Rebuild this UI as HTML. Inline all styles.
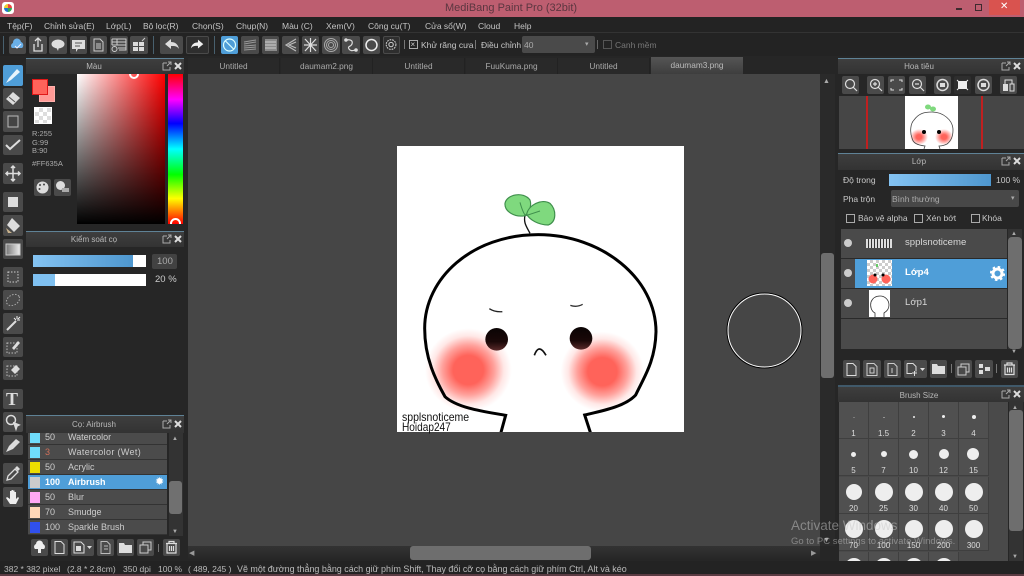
<!DOCTYPE html>
<html><head><meta charset="utf-8"><style>
html,body{margin:0;padding:0;width:1024px;height:576px;overflow:hidden;background:#262626}
body{position:relative;font-family:"Liberation Sans","DejaVu Sans",sans-serif;color:#c8c8c8;font-size:9px}
div,span,svg{position:absolute;box-sizing:border-box}
.t{white-space:nowrap;line-height:12px}
.b{background:#4a4a4a;border-radius:2px}
.b svg{left:0;top:0;width:100%;height:100%}
.h{background:linear-gradient(#3e3e3e,#333);border-top:1px solid #5f8296;text-align:center;color:#b8b8b8;font-size:8px;line-height:15px;padding-right:22px}
.m{top:20px;font-size:8.5px;color:#c4c4c4}
.tab{top:58px;height:16px;text-align:center;font-size:8.3px;line-height:17px;color:#aaa;background:#292929;border-right:1px solid #222}
.row{left:28px;width:139px;height:15px;background:#4b4b4b;border-bottom:1px solid #333;color:#ccc;font-size:9px;line-height:14px}
.row .sw{left:2px;top:2px;width:10px;height:11px}
.row .n{left:17px;top:0}.row .l{left:40px;top:0}
.cell{width:30px;height:37px;background:#505050;border-right:1px solid #3f3f3f;border-bottom:1px solid #3f3f3f;color:#ddd;font-size:8px;text-align:center}
.cell i{position:absolute;background:#eee;border-radius:50%}
.cell span{left:0;width:100%;top:27px;line-height:10px}
.c{font-size:8.5px}
</style></head><body>

<div style="left:0;top:0;width:1024px;height:17px;background:#bd5e70"></div>
<div style="left:2px;top:2px;width:12px;height:12px;border-radius:3px;background:#fff"></div>
<div style="left:4px;top:4px;width:8px;height:8px;border-radius:50%;background:conic-gradient(#e44 0 25%,#3a5 0 50%,#27c 0 75%,#ec3 0)"></div>
<div class="t" style="left:445px;top:2px;font-size:11px;line-height:13px;color:#5b3640">MediBang Paint Pro (32bit)</div>
<div style="left:956px;top:8px;width:6px;height:2px;background:#3d2a2e"></div>
<div style="left:975px;top:4px;width:7px;height:7px;border:1px solid #3d2a2e"></div>
<div style="left:989px;top:0;width:31px;height:15px;background:#d9534f"></div>
<div class="t" style="left:1000px;top:1px;font-size:10px;color:#fff;font-weight:bold">✕</div>

<div style="left:0;top:17px;width:1024px;height:16px;background:#232323;border-bottom:1px solid #333"></div>
<div class="t m" style="left:7px">Tệp(F)</div>
<div class="t m" style="left:44px">Chỉnh sửa(E)</div>
<div class="t m" style="left:106px">Lớp(L)</div>
<div class="t m" style="left:143px">Bộ lọc(R)</div>
<div class="t m" style="left:192px">Chọn(S)</div>
<div class="t m" style="left:236px">Chụp(N)</div>
<div class="t m" style="left:282px">Màu (C)</div>
<div class="t m" style="left:326px">Xem(V)</div>
<div class="t m" style="left:368px">Công cụ(T)</div>
<div class="t m" style="left:425px">Cửa sổ(W)</div>
<div class="t m" style="left:478px">Cloud</div>
<div class="t m" style="left:514px">Help</div>

<div style="left:0;top:33px;width:1024px;height:23px;background:#232323"></div>
<div style="left:3px;top:36px;width:1px;height:18px;background:#48606e"></div>
<div class="b" style="left:9px;top:36px;width:17px;height:18px"><svg viewBox="0 0 17 18"><path d="M3 12a3 3 0 0 1 1-5 4 4 0 0 1 8-1 3.500 3.500 0 0 1 1 6z" fill="#6ab0e8"/><path d="M6 10l2 2 4-4" stroke="#eef" fill="none"/></svg></div>
<div class="b" style="left:29px;top:36px;width:18px;height:18px"><svg viewBox="0 0 18 18" fill="none" stroke="#ddd" stroke-width="1.300"><path d="M5 8v7h8V8M9 11V3M6 5l3-3 3 3"/></svg></div>
<div class="b" style="left:49px;top:36px;width:18px;height:18px"><svg viewBox="0 0 18 18"><ellipse cx="9" cy="8" rx="6.500" ry="4.500" fill="#ddd"/><path d="M7 11l2 4 1-4z" fill="#ddd"/></svg></div>
<div class="b" style="left:70px;top:36px;width:17px;height:18px"><svg viewBox="0 0 17 18"><path d="M2 4h13v9H8l-2 3v-3H2z" fill="#ddd"/><path d="M5 7h7M5 10h5" stroke="#555"/></svg></div>
<div class="b" style="left:90px;top:36px;width:17px;height:18px"><svg viewBox="0 0 17 18" fill="none" stroke="#ccc"><path d="M4 3h6l3 3v9H4zM6 8h5M6 10h5M6 12h5"/></svg></div>
<div class="b" style="left:110px;top:36px;width:18px;height:18px"><svg viewBox="0 0 18 18" fill="none" stroke="#ccc"><path d="M2 3h14v11H9M2 3v6M2 6h14M2 9h14M7 3v6M8 12h8"/><circle cx="4.500" cy="13" r="2.500"/></svg></div>
<div class="b" style="left:130px;top:36px;width:18px;height:18px"><svg viewBox="0 0 18 18"><path d="M3 6h5v4H3zM9 6h5v4H9zM3 11h5v4H3zM9 11h5v4H9z" fill="#ddd"/><path d="M12 5l3-3" stroke="#ccc"/></svg></div>
<div style="left:153px;top:36px;width:1px;height:18px;background:#48606e"></div>
<div class="b" style="left:160px;top:36px;width:23px;height:18px"><svg viewBox="0 0 23 18"><path d="M5 8l6-5v3c4 0 7 2 8 7-2-3-4-3-8-3v3z" fill="#ddd"/></svg></div>
<div class="b" style="left:186px;top:36px;width:23px;height:18px;background:#2e2e2e;border:1px solid #4a4a4a"><svg viewBox="0 0 23 18"><path d="M18 8l-6-5v3c-4 0-7 2-8 7 2-3 4-3 8-3v3z" fill="#eee"/></svg></div>
<div style="left:214px;top:36px;width:1px;height:18px;background:#48606e"></div>
<div class="b" style="left:221px;top:36px;width:17px;height:18px;background:#4f9ed8"><svg viewBox="0 0 17 18" fill="none" stroke="#dff" stroke-width="1.200"><circle cx="8.500" cy="9" r="6"/><path d="M4 4.500l9 9"/></svg></div>
<div class="b" style="left:241px;top:36px;width:18px;height:18px"><svg viewBox="0 0 18 18" fill="none" stroke="#999"><path d="M3 6l12-2M3 8l12-2M3 10l12-1M3 12l12-1M3 14l12-1"/></svg></div>
<div class="b" style="left:262px;top:36px;width:17px;height:18px"><svg viewBox="0 0 17 18" fill="none" stroke="#ccc"><path d="M4 3v12M6 3v12M8 3v12M10 3v12M12 3v12M14 3v12M3 6h11M3 9h11M3 12h11"/></svg></div>
<div class="b" style="left:282px;top:36px;width:17px;height:18px"><svg viewBox="0 0 17 18" fill="none" stroke="#bbb" stroke-width="1.200"><path d="M14 3L4 9l10 6M14 6L7 9l7 3"/></svg></div>
<div class="b" style="left:302px;top:36px;width:17px;height:18px"><svg viewBox="0 0 17 18" fill="none" stroke="#ddd" stroke-width="1.200"><path d="M3 3l11 12M14 3L3 15M8.500 2v14M2 9h13"/></svg></div>
<div class="b" style="left:322px;top:36px;width:18px;height:18px"><svg viewBox="0 0 18 18" fill="none" stroke="#aaa"><circle cx="9" cy="9" r="6.500"/><circle cx="9" cy="9" r="4.500"/><circle cx="9" cy="9" r="2.500"/></svg></div>
<div class="b" style="left:342px;top:36px;width:18px;height:18px"><svg viewBox="0 0 18 18" fill="none" stroke="#ddd" stroke-width="1.200"><path d="M4 4c5-1 7 1 6 4s-5 2-3 5 5 1 7 1"/><circle cx="4" cy="4" r="1.200" fill="#ddd"/><circle cx="14" cy="14" r="1.200" fill="#ddd"/></svg></div>
<div class="b" style="left:363px;top:36px;width:17px;height:18px"><svg viewBox="0 0 17 18" fill="none" stroke="#eee" stroke-width="1.500"><circle cx="8.500" cy="9" r="5.500"/></svg></div>
<div class="b" style="left:383px;top:36px;width:17px;height:18px;background:#2e2e2e;border:1px solid #4a4a4a"><svg viewBox="0 0 17 18" fill="none" stroke="#ccc" stroke-width="1.200"><circle cx="8" cy="8.500" r="2.500"/><circle cx="8" cy="8.500" r="5.500" stroke-dasharray="2 1"/></svg></div>
<div style="left:404px;top:40px;width:1px;height:9px;background:#777"></div>
<div style="left:409px;top:40px;width:9px;height:9px;border:1px solid #aaa"></div>
<div class="t" style="left:410.500px;top:39px;font-size:8px;color:#ccc">×</div>
<div class="t c" style="left:421px;top:39px">Khử răng cưa</div>
<div style="left:475px;top:40px;width:1px;height:9px;background:#777"></div>
<div class="t c" style="left:481px;top:39px">Điều chỉnh</div>
<div style="left:522px;top:36px;width:73px;height:17px;background:#4a4a4a;border-radius:2px"></div>
<div class="t" style="left:524px;top:39px;font-size:8.500px;color:#aaa">40</div>
<div class="t" style="left:585px;top:39px;font-size:7px;color:#aaa">▾</div>
<div style="left:597px;top:40px;width:1px;height:9px;background:#666"></div>
<div style="left:603px;top:40px;width:9px;height:9px;border:1px solid #555"></div>
<div class="t c" style="left:615px;top:39px;color:#777">Canh mềm</div>

<div style="left:186px;top:56px;width:650px;height:18px;background:#262626"></div>
<div class="tab" style="left:188px;width:92px">Untitled</div>
<div class="tab" style="left:281px;width:92px">daumam2.png</div>
<div class="tab" style="left:373px;width:92px">Untitled</div>
<div class="tab" style="left:466px;width:92px">FuuKuma.png</div>
<div class="tab" style="left:558px;width:92px">Untitled</div>
<div class="tab" style="left:651px;top:57px;height:17px;width:92px;background:linear-gradient(#555,#3e3e3e);color:#bbb;border:0">daumam3.png</div>

<div style="left:188px;top:74px;width:632px;height:472px;background:#464646"></div>
<div style="left:397px;top:146px;width:287px;height:286px;background:#fff"></div>
<svg style="left:395px;top:145px;width:290px;height:290px" viewBox="0 0 870 870">
<defs>
<radialGradient id="bl"><stop offset="0" stop-color="#ff635a"/><stop offset=".35" stop-color="#ff635a"/><stop offset=".6" stop-color="#ff635a" stop-opacity=".6"/><stop offset=".82" stop-color="#ff635a" stop-opacity=".15"/><stop offset="1" stop-color="#ff635a" stop-opacity="0"/></radialGradient>
<linearGradient id="ey" x1="0" y1="0" x2="0" y2="1"><stop offset="0" stop-color="#0a0404"/><stop offset=".6" stop-color="#1a0808"/><stop offset="1" stop-color="#5a2a2a"/></linearGradient>
<clipPath id="cv"><rect x="6" y="3" width="861" height="858"/></clipPath>
</defs>
<g clip-path="url(#cv)">
<ellipse cx="220" cy="675" rx="130" ry="125" fill="url(#bl)"/>
<ellipse cx="622" cy="680" rx="125" ry="120" fill="url(#bl)"/>
<path d="M318 862L332 811C285 802 190 792 150 755 122 705 89 640 89 550 89 400 230 269 430 269 620 269 783 400 783 560 781 650 745 700 722 750 690 785 620 798 569 810L586 862" fill="none" stroke="#000" stroke-width="9"/>
<circle cx="305" cy="583" r="34" fill="url(#ey)"/>
<circle cx="558" cy="580" r="34" fill="url(#ey)"/>
<path d="M418 631C425 612 435 600 453 631" fill="none" stroke="#111" stroke-width="5"/>
<path d="M283 491Q300 502 322 500" fill="none" stroke="#222" stroke-width="4"/>
<path d="M526 481Q545 488 563 478" fill="none" stroke="#333" stroke-width="4"/>
<path d="M405 265C395 245 385 235 390 210" fill="none" stroke="#111" stroke-width="4"/>
<path d="M390 212C360 218 328 200 330 175 335 148 385 138 405 165 410 180 405 200 390 212Z" fill="#7fd97e" stroke="#3f8f4c" stroke-width="3.500"/>
<path d="M395 208C400 180 440 160 465 175 485 195 485 230 460 240 430 240 405 225 395 208Z" fill="#7fd97e" stroke="#3f8f4c" stroke-width="3.500"/>
<path d="M375 172C380 190 385 205 392 212L435 198" fill="none" stroke="#3f8f4c" stroke-width="3"/>
</g>
</svg>
<div class="t" style="left:402px;top:411px;font-size:12px;color:#111;transform:scaleX(.875);transform-origin:0 0">spplsnoticeme</div>
<div class="t" style="left:402px;top:421px;font-size:12px;color:#111;transform:scaleX(.84);transform-origin:0 0">Hoidap247</div>
<svg style="left:725px;top:291px;width:80px;height:80px" viewBox="0 0 80 80"><circle cx="39.500" cy="39.500" r="37.500" fill="none" stroke="#000" stroke-width="1"/><circle cx="39.500" cy="39.500" r="36.500" fill="none" stroke="#fff" stroke-width="1"/></svg>

<div style="left:820px;top:74px;width:15px;height:472px;background:#2a2a2a"></div>
<div style="left:821px;top:253px;width:13px;height:125px;background:#6e6e6e;border-radius:3px"></div>
<div class="t" style="left:823px;top:76px;font-size:7px;color:#aaa">▲</div>
<div class="t" style="left:823px;top:535px;font-size:7px;color:#aaa">▼</div>
<div style="left:188px;top:546px;width:632px;height:14px;background:linear-gradient(#333,#262626)"></div>
<div style="left:410px;top:546px;width:181px;height:14px;background:#6e6e6e;border-radius:3px"></div>
<div class="t" style="left:189px;top:548px;font-size:7px;color:#999">◀</div>
<div class="t" style="left:811px;top:548px;font-size:7px;color:#999">▶</div>

<div style="left:0;top:56px;width:26px;height:501px;background:#262626"></div>
<div class="b" style="left:3px;top:65px;width:20px;height:21px;background:#4f9ed8"><svg viewBox="0 0 20 21"><path d="M3 18l3-5 8-9 3 3-9 8z" fill="#e8f4fc"/></svg></div>
<div class="b" style="left:3px;top:88px;width:20px;height:21px"><svg viewBox="0 0 20 21"><path d="M3 11l7-7 7 6-7 7z" fill="#ddd"/><path d="M6 9l6 5" stroke="#555"/></svg></div>
<div class="b" style="left:3px;top:111px;width:20px;height:21px"><svg viewBox="0 0 20 21"><rect x="5" y="5" width="10" height="11" fill="#444" stroke="#bbb"/></svg></div>
<div class="b" style="left:3px;top:135px;width:20px;height:20px"><svg viewBox="0 0 20 20" fill="none" stroke="#ddd" stroke-width="2"><path d="M3 10l4 4 10-9"/></svg></div>
<div class="b" style="left:3px;top:163px;width:20px;height:21px"><svg viewBox="0 0 20 21" fill="none" stroke="#ddd" stroke-width="1.500"><path d="M10 3v15M3 10.500h14M8 5l2-2 2 2M8 16l2 2 2-2M5 8.500l-2 2 2 2M15 8.500l2 2-2 2"/></svg></div>
<div class="b" style="left:3px;top:192px;width:20px;height:20px"><svg viewBox="0 0 20 20"><rect x="5" y="5" width="10" height="10" fill="#ddd"/></svg></div>
<div class="b" style="left:3px;top:215px;width:20px;height:21px"><svg viewBox="0 0 20 21"><path d="M9 3l8 8-6 6-7-7z" fill="#ddd"/><path d="M3 13l2 5h4" fill="#c9b28b"/></svg></div>
<div class="b" style="left:3px;top:239px;width:20px;height:20px"><svg viewBox="0 0 20 20"><defs><linearGradient id="g1"><stop offset="0" stop-color="#777"/><stop offset="1" stop-color="#eee"/></linearGradient></defs><rect x="3" y="5" width="14" height="11" fill="url(#g1)" stroke="#ccc"/></svg></div>
<div class="b" style="left:3px;top:267px;width:20px;height:20px"><svg viewBox="0 0 20 20"><rect x="5" y="5" width="10" height="10" fill="none" stroke="#ccc" stroke-dasharray="1.500 1.500"/></svg></div>
<div class="b" style="left:3px;top:290px;width:20px;height:20px"><svg viewBox="0 0 20 20"><ellipse cx="10" cy="10" rx="7" ry="5" fill="none" stroke="#aaa" stroke-dasharray="1.500 1.500" transform="rotate(-30 10 10)"/></svg></div>
<div class="b" style="left:3px;top:313px;width:20px;height:21px"><svg viewBox="0 0 20 21"><path d="M4 17L13 8" stroke="#ddd" stroke-width="2"/><path d="M14 3v3M17 7h-3M11 5l2 2M17 4l-2 2" stroke="#eee"/></svg></div>
<div class="b" style="left:3px;top:337px;width:20px;height:20px"><svg viewBox="0 0 20 20"><rect x="4" y="6" width="10" height="10" fill="none" stroke="#bbb" stroke-dasharray="1.500 1.500"/><path d="M9 11l6-7 2 2-6 7z" fill="#ddd"/></svg></div>
<div class="b" style="left:3px;top:360px;width:20px;height:20px"><svg viewBox="0 0 20 20"><rect x="4" y="6" width="10" height="10" fill="none" stroke="#bbb" stroke-dasharray="1.500 1.500"/><path d="M8 10l5-5 4 4-5 5z" fill="#ddd"/></svg></div>
<div class="b" style="left:3px;top:389px;width:20px;height:20px"></div>
<div class="t" style="left:6px;top:390px;font-family:'Liberation Serif',serif;font-weight:bold;font-size:18px;line-height:18px;color:#ddd">T</div>
<div class="b" style="left:3px;top:412px;width:20px;height:20px"><svg viewBox="0 0 20 20" fill="none" stroke="#ddd" stroke-width="1.500"><circle cx="8" cy="8" r="4.500"/><path d="M11 11l5 2-2 1-1 3z" fill="#ddd"/></svg></div>
<div class="b" style="left:3px;top:435px;width:20px;height:20px"><svg viewBox="0 0 20 20"><path d="M3 17l3-6 7-7 4 3-7 7z" fill="#ddd"/></svg></div>
<div class="b" style="left:3px;top:463px;width:20px;height:21px"><svg viewBox="0 0 20 21"><path d="M4 17l1-4 7-7 3 3-7 7z" fill="none" stroke="#ddd" stroke-width="1.300"/><path d="M12 5l2-2 3 3-2 2z" fill="#ddd"/></svg></div>
<div class="b" style="left:3px;top:487px;width:20px;height:20px"><svg viewBox="0 0 20 20"><path d="M7 17L3 11l1-1 3 2V4h1.500v6V3H10v7V3.500h1.500V10V5H13v7l2-2 1 1-3 6z" fill="#eee"/></svg></div>

<div class="h" style="left:26px;top:58px;width:158px;height:16px">Màu</div>
<div style="left:26px;top:74px;width:158px;height:157px;background:#262626"></div>
<div style="left:39px;top:86px;width:16px;height:16px;background:#ff9a96;border:1px solid #ffb0ac"></div>
<div style="left:32px;top:79px;width:16px;height:16px;background:#ff635a;border:1px solid #e01818"></div>
<div style="left:34px;top:107px;width:18px;height:17px;border:1px solid #fff;background:conic-gradient(#ddd 0 25%,#fff 0 50%,#ddd 0 75%,#fff 0);background-size:8px 8px"></div>
<div class="t" style="left:32px;top:130px;font-size:7.500px;line-height:8.500px;color:#aaa">R:255<br>G:99<br>B:90</div>
<div class="t" style="left:32px;top:158px;font-size:7.500px;color:#aaa">#FF635A</div>
<div class="b" style="left:34px;top:179px;width:17px;height:17px"><svg viewBox="0 0 17 17"><circle cx="8.500" cy="8.500" r="6" fill="#ddd"/><circle cx="6" cy="6" r="1" fill="#444"/><circle cx="10" cy="5.500" r="1" fill="#444"/><circle cx="5.500" cy="10" r="1" fill="#444"/></svg></div>
<div class="b" style="left:54px;top:179px;width:17px;height:17px"><svg viewBox="0 0 17 17"><circle cx="6.500" cy="6.500" r="4.500" fill="#ddd"/><rect x="8" y="9" width="7" height="4" fill="#aaa"/></svg></div>
<div style="left:77px;top:74px;width:88px;height:150px;overflow:hidden;background:linear-gradient(transparent,#000),linear-gradient(90deg,#fff,#f00)"><div style="left:52px;top:-5px;width:10px;height:10px;border:2px solid #fff;border-radius:50%"></div></div>
<div style="left:168px;top:74px;width:15px;height:150px;overflow:hidden;background:linear-gradient(#f00,#f0f 17%,#00f 33%,#0ff 50%,#0f0 67%,#ff0 83%,#f00)"><div style="left:2px;top:144px;width:11px;height:11px;border:2px solid #fff;border-radius:50%"></div></div>
<svg style="left:162px;top:61px;width:20px;height:10px" viewBox="0 0 20 10" fill="none" stroke="#aaa"><path d="M1 2h4M1 2v7h7V6M5 5l4-4M6 1h3v3"/><path d="M13 2l6 6M19 2l-6 6" stroke="#ddd" stroke-width="2"/></svg>

<div class="h" style="left:26px;top:231px;width:158px;height:16px">Kiểm soát cọ</div>
<svg style="left:162px;top:234px;width:20px;height:10px" viewBox="0 0 20 10" fill="none" stroke="#aaa"><path d="M1 2h4M1 2v7h7V6M5 5l4-4M6 1h3v3"/><path d="M13 2l6 6M19 2l-6 6" stroke="#ddd" stroke-width="2"/></svg>
<div style="left:33px;top:255px;width:113px;height:12px;background:#fff"></div>
<div style="left:33px;top:255px;width:100px;height:12px;background:linear-gradient(90deg,#84c3f2,#4e97cf)"></div>
<div style="left:33px;top:274px;width:113px;height:12px;background:#fff"></div>
<div style="left:33px;top:274px;width:22px;height:12px;background:#7fc0f0"></div>
<div style="left:152px;top:254px;width:25px;height:15px;background:#424242;border-radius:2px"></div>
<div class="t" style="left:157px;top:256px;font-size:9.500px;color:#aaa">100</div>
<div class="t" style="left:155px;top:274px;font-size:9.500px;color:#ccc">20 %</div>

<div style="left:26px;top:415px;width:158px;height:142px;background:#262626"></div>
<div class="h" style="left:26px;top:415px;width:158px;height:18px;line-height:18px">Cọ: Airbrush</div>
<svg style="left:162px;top:419px;width:20px;height:10px" viewBox="0 0 20 10" fill="none" stroke="#aaa"><path d="M1 2h4M1 2v7h7V6M5 5l4-4M6 1h3v3"/><path d="M13 2l6 6M19 2l-6 6" stroke="#ddd" stroke-width="2"/></svg>
<div class="row" style="top:433px;height:12px;overflow:hidden"><div class="sw" style="top:-1px;background:#6fdcfa"></div><span class="n" style="top:-3px">50</span><span class="l" style="top:-3px">Watercolor</span></div>
<div class="row" style="top:445px"><div class="sw" style="background:#6fdcfa"></div><span class="n" style="color:#d0705a">3</span><span class="l" style="letter-spacing:.35px">Watercolor (Wet)</span></div>
<div class="row" style="top:460px"><div class="sw" style="background:#eedd00"></div><span class="n">50</span><span class="l">Acrylic</span></div>
<div class="row" style="top:475px;background:#4f9ed8;color:#fff;font-weight:bold"><div class="sw" style="background:#ccc"></div><span class="n">100</span><span class="l">Airbrush</span></div>
<div class="t" style="left:155px;top:476px;font-size:11px;color:#fff">✹</div>
<div class="row" style="top:490px"><div class="sw" style="background:#ffa8f5"></div><span class="n">50</span><span class="l">Blur</span></div>
<div class="row" style="top:505px"><div class="sw" style="background:#ffd8b8"></div><span class="n">70</span><span class="l">Smudge</span></div>
<div class="row" style="top:520px"><div class="sw" style="background:#3050ee"></div><span class="n">100</span><span class="l">Sparkle Brush</span></div>
<div style="left:169px;top:433px;width:14px;height:103px;background:#333"></div>
<div style="left:169px;top:481px;width:13px;height:33px;background:#707070;border-radius:3px"></div>
<div class="t" style="left:172px;top:433px;font-size:6px;color:#aaa">▲</div>
<div class="t" style="left:172px;top:526px;font-size:6px;color:#aaa">▼</div>
<div class="b" style="left:31px;top:539px;width:17px;height:17px"><svg viewBox="0 0 17 17"><path d="M4 10a3 3 0 0 1 1-5 3.500 3.500 0 0 1 7 0 3 3 0 0 1 1 5z" fill="#eee"/><path d="M7 10h3v4H7z" fill="#eee"/></svg></div>
<div class="b" style="left:51px;top:539px;width:17px;height:17px"><svg viewBox="0 0 17 17" fill="none" stroke="#ddd"><path d="M4 2.500h6l3 3v9H4z"/></svg></div>
<div class="b" style="left:71px;top:539px;width:23px;height:17px"><svg viewBox="0 0 23 17"><path d="M3 3h7l3 3v8H3z" fill="none" stroke="#ddd"/><rect x="5" y="7" width="5" height="5" fill="#ddd"/><path d="M16 7h5l-2.500 3z" fill="#ddd"/></svg></div>
<div class="b" style="left:97px;top:539px;width:17px;height:17px"><svg viewBox="0 0 17 17" fill="none" stroke="#bbb"><path d="M4 2.500h6l3 3v9H4zM7 7h4M7 10h4"/></svg></div>
<div class="b" style="left:117px;top:539px;width:17px;height:17px"><svg viewBox="0 0 17 17"><path d="M2 4h5l1 2h7v8H2z" fill="#ddd"/></svg></div>
<div class="b" style="left:137px;top:539px;width:17px;height:17px"><svg viewBox="0 0 17 17" fill="none" stroke="#ccc"><path d="M3 6h8v8H3zM6 6V3h8v8h-3"/></svg></div>
<div style="left:158px;top:544px;width:1px;height:8px;background:#777"></div>
<div class="b" style="left:163px;top:539px;width:17px;height:17px"><svg viewBox="0 0 17 17" fill="none" stroke="#ddd" stroke-width="1.200"><path d="M3 4.500h11M6 4V2.500h5V4M4 5v9h9V5M6.500 7v5M8.500 7v5M10.500 7v5"/></svg></div>

<div style="left:838px;top:58px;width:186px;height:342px;background:#262626"></div>
<div class="h" style="left:838px;top:58px;width:186px;height:16px;padding-right:24px">Hoa tiêu</div>
<svg style="left:1001px;top:61px;width:20px;height:10px" viewBox="0 0 20 10" fill="none" stroke="#aaa"><path d="M1 2h4M1 2v7h7V6M5 5l4-4M6 1h3v3"/><path d="M13 2l6 6M19 2l-6 6" stroke="#ddd" stroke-width="2"/></svg>
<div class="b" style="left:842px;top:76px;width:17px;height:18px"><svg viewBox="0 0 17 18" fill="none" stroke="#ddd" stroke-width="1.200"><circle cx="8" cy="8" r="4.500"/><path d="M11 11l4 4"/></svg></div>
<div class="b" style="left:867px;top:76px;width:17px;height:18px"><svg viewBox="0 0 17 18" fill="none" stroke="#ddd" stroke-width="1.200"><circle cx="8" cy="8" r="4.500"/><path d="M11 11l4 4M6 8h4M8 6v4"/></svg></div>
<div class="b" style="left:888px;top:76px;width:17px;height:18px"><svg viewBox="0 0 17 18" fill="none" stroke="#ddd"><path d="M3 6V4h3M11 4h3v2M14 12v2h-3M6 14H3v-2"/></svg></div>
<div class="b" style="left:909px;top:76px;width:17px;height:18px"><svg viewBox="0 0 17 18" fill="none" stroke="#ddd" stroke-width="1.200"><circle cx="8" cy="8" r="4.500"/><path d="M11 11l4 4M6 8h4"/></svg></div>
<div class="b" style="left:934px;top:76px;width:17px;height:18px"><svg viewBox="0 0 17 18"><circle cx="8.500" cy="9" r="5.500" fill="none" stroke="#ddd" stroke-width="1.500"/><path d="M6 7h5v4H6z" fill="#ddd"/></svg></div>
<div class="b" style="left:954px;top:76px;width:17px;height:18px;background:#2e2e2e"><svg viewBox="0 0 17 18"><rect x="4" y="5" width="9" height="8" fill="#eee"/><path d="M3 4l2 2M14 4l-2 2M3 14l2-2M14 14l-2-2" stroke="#eee"/></svg></div>
<div class="b" style="left:975px;top:76px;width:17px;height:18px"><svg viewBox="0 0 17 18"><circle cx="8.500" cy="9" r="5.500" fill="none" stroke="#ddd" stroke-width="1.500"/><path d="M6 7h5v4H6z" fill="#ddd"/></svg></div>
<div class="b" style="left:1000px;top:76px;width:17px;height:18px"><svg viewBox="0 0 17 18"><path d="M3 8h5v7H3z" fill="#ddd"/><path d="M5 8V4h7v4" fill="none" stroke="#ddd"/><path d="M10 8h4v7h-4z" fill="none" stroke="#ddd"/></svg></div>

<div style="left:839px;top:96px;width:185px;height:53px;background:#464646"></div>
<div style="left:866px;top:96px;width:2px;height:53px;background:#c02020"></div>
<div style="left:981px;top:96px;width:2px;height:53px;background:#c02020"></div>
<svg style="left:905px;top:96px;width:53px;height:53px;background:#fff" viewBox="0 0 53 53">
<defs><radialGradient id="bl2"><stop offset=".3" stop-color="#ff635a"/><stop offset="1" stop-color="#ff635a" stop-opacity="0"/></radialGradient></defs>
<ellipse cx="14" cy="41" rx="9" ry="8" fill="url(#bl2)"/><ellipse cx="39" cy="41" rx="9" ry="8" fill="url(#bl2)"/>
<path d="M19 53L20 50C12 49 8 47 7 42 5 37 5 28 9 24 14 17 20 16 27 16 38 16 48 24 48 34 48 40 46 45 42 48 38 50 34 50 34 50L35 53" fill="none" stroke="#444" stroke-width=".8"/>
<circle cx="19" cy="36" r="2" fill="#000"/><circle cx="34" cy="36" r="2" fill="#000"/>
<ellipse cx="23" cy="11" rx="3" ry="2.500" fill="#7fd97e"/><ellipse cx="28" cy="13" rx="3" ry="2.500" fill="#7fd97e"/>
</svg>

<div class="h" style="left:838px;top:153px;width:186px;height:17px;line-height:16px;padding-right:24px">Lớp</div>
<svg style="left:1001px;top:156px;width:20px;height:10px" viewBox="0 0 20 10" fill="none" stroke="#aaa"><path d="M1 2h4M1 2v7h7V6M5 5l4-4M6 1h3v3"/><path d="M13 2l6 6M19 2l-6 6" stroke="#ddd" stroke-width="2"/></svg>
<div class="t c" style="left:843px;top:174px">Độ trong</div>
<div style="left:889px;top:174px;width:102px;height:12px;background:linear-gradient(90deg,#84c3f2,#4e97cf)"></div>
<div class="t c" style="left:996px;top:174px">100 %</div>
<div class="t c" style="left:843px;top:193px">Pha trộn</div>
<div style="left:891px;top:190px;width:128px;height:17px;background:#484848;border-radius:2px"></div>
<div class="t c" style="left:892px;top:193px;color:#aaa">Bình thường</div>
<div class="t" style="left:1011px;top:193px;font-size:7px;color:#aaa">▾</div>
<div style="left:846px;top:214px;width:9px;height:9px;border:1px solid #aaa"></div>
<div class="t c" style="left:858px;top:212px">Bảo vệ alpha</div>
<div style="left:914px;top:214px;width:9px;height:9px;border:1px solid #aaa"></div>
<div class="t c" style="left:926px;top:212px">Xén bớt</div>
<div style="left:971px;top:214px;width:9px;height:9px;border:1px solid #aaa"></div>
<div class="t c" style="left:982px;top:212px">Khóa</div>

<div style="left:841px;top:229px;width:166px;height:120px;background:#4a4a4a"></div>
<div style="left:841px;top:258px;width:166px;height:1px;background:#2a2a2a"></div>
<div style="left:841px;top:288px;width:166px;height:1px;background:#2a2a2a"></div>
<div style="left:841px;top:318px;width:166px;height:1px;background:#2a2a2a"></div>
<div style="left:855px;top:259px;width:152px;height:29px;background:#4f9ed8"></div>
<div style="left:844px;top:239px;width:8px;height:8px;border-radius:50%;background:#ccc"></div>
<div style="left:844px;top:269px;width:8px;height:8px;border-radius:50%;background:#ccc"></div>
<div style="left:844px;top:299px;width:8px;height:8px;border-radius:50%;background:#ccc"></div>
<div style="left:866px;top:239px;width:26px;height:9px;background:repeating-linear-gradient(90deg,#ddd 0 2px,#333 2px 3px)"></div>
<div style="left:867px;top:260px;width:25px;height:26px;background:conic-gradient(#ccc 0 25%,#fff 0 50%,#ccc 0 75%,#fff 0);background-size:6px 6px"></div>
<svg style="left:867px;top:260px;width:25px;height:26px" viewBox="0 0 25 26"><path d="M9 4h2v3H9z" fill="#6c6"/><circle cx="6" cy="19" r="4.500" fill="#ff635a"/><circle cx="19" cy="19" r="4.500" fill="#ff635a"/><circle cx="8" cy="15" r="1.500" fill="#000"/><circle cx="16" cy="15" r="1.500" fill="#000"/></svg>
<svg style="left:869px;top:290px;width:21px;height:27px;background:#fff" viewBox="0 0 21 27"><path d="M6 27v-4C2 21 1 16 2 12 4 7 8 6 11 6c5 0 9 4 9 9 0 4-2 6-5 8v4" fill="none" stroke="#333" stroke-width=".8"/></svg>
<div class="t" style="left:905px;top:237px;font-size:9.600px;color:#d8d8d8">spplsnoticeme</div>
<div class="t" style="left:905px;top:267px;font-size:9.600px;color:#fff;font-weight:bold">Lớp4</div>
<div class="t" style="left:905px;top:297px;font-size:9.600px;color:#d8d8d8">Lớp1</div>
<svg style="left:990px;top:266px;width:15px;height:15px" viewBox="0 0 15 15"><circle cx="7.500" cy="7.500" r="4.500" fill="none" stroke="#fff" stroke-width="3"/><circle cx="7.500" cy="7.500" r="6.500" fill="none" stroke="#fff" stroke-width="2.200" stroke-dasharray="2.500 2.600"/></svg>
<div style="left:1008px;top:229px;width:14px;height:120px;background:#333"></div>
<div style="left:1008px;top:237px;width:14px;height:112px;background:#6e6e6e;border-radius:4px"></div>
<div class="t" style="left:1011px;top:228px;font-size:6px;color:#aaa">▲</div>
<div class="t" style="left:1011px;top:346px;font-size:6px;color:#aaa">▼</div>

<div class="b" style="left:843px;top:360px;width:17px;height:18px"><svg viewBox="0 0 17 18" fill="none" stroke="#ddd"><path d="M4 3.500h6l3 3v9H4z"/></svg></div>
<div class="b" style="left:863px;top:360px;width:18px;height:18px"><svg viewBox="0 0 18 18" fill="none" stroke="#ccc"><path d="M4 3.500h7l3 3v9H4zM7 8h4v5H7z"/></svg></div>
<div class="b" style="left:884px;top:360px;width:17px;height:18px"><svg viewBox="0 0 17 18" fill="none" stroke="#ccc"><path d="M4 3.500h6l3 3v9H4zM8 8v5"/></svg></div>
<div class="b" style="left:904px;top:360px;width:23px;height:18px"><svg viewBox="0 0 23 18"><path d="M3 3.500h6l3 3v5M3 3.500v10h5M8 13h5M10.500 11v5" fill="none" stroke="#ddd"/><path d="M16 8h5l-2.500 3z" fill="#ddd"/></svg></div>
<div class="b" style="left:930px;top:360px;width:17px;height:18px"><svg viewBox="0 0 17 18"><path d="M2 4h5l1 2h7v8H2z" fill="#ddd"/></svg></div>
<div style="left:951px;top:364px;width:1px;height:9px;background:#777"></div>
<div class="b" style="left:955px;top:360px;width:17px;height:18px"><svg viewBox="0 0 17 18" fill="none" stroke="#ccc"><path d="M3 7h8v8H3zM6 7V4h8v8h-3"/></svg></div>
<div class="b" style="left:975px;top:360px;width:18px;height:18px"><svg viewBox="0 0 18 18"><path d="M4 4h4v4H4zM4 10h4v4H4zM10 7h5v4h-5z" fill="#ddd"/></svg></div>
<div style="left:996px;top:364px;width:1px;height:9px;background:#777"></div>
<div class="b" style="left:1001px;top:360px;width:17px;height:18px"><svg viewBox="0 0 17 18" fill="none" stroke="#ddd" stroke-width="1.200"><path d="M3 5h11M6 4.500V3h5v1.500M4 5.500v9h9v-9M6.500 7.500v5M8.500 7.500v5M10.500 7.500v5"/></svg></div>

<div style="left:838px;top:385px;width:186px;height:172px;background:#262626"></div>
<div class="h" style="left:838px;top:385px;width:186px;height:17px;line-height:17px;border-top:2px solid #40596a;padding-right:24px">Brush Size</div>
<svg style="left:1001px;top:389px;width:20px;height:10px" viewBox="0 0 20 10" fill="none" stroke="#aaa"><path d="M1 2h4M1 2v7h7V6M5 5l4-4M6 1h3v3"/><path d="M13 2l6 6M19 2l-6 6" stroke="#ddd" stroke-width="2"/></svg>
<div style="left:839px;top:402px;width:169px;height:159px;background:#4a4a4a;overflow:hidden">
<div class="cell" style="left:0;top:0"><i style="left:14px;top:15px;width:2px;height:1px;background:#888"></i><span>1</span></div>
<div class="cell" style="left:30px;top:0"><i style="left:14px;top:15px;width:2px;height:1px;background:#aaa"></i><span>1.5</span></div>
<div class="cell" style="left:60px;top:0"><i style="left:14px;top:14px;width:2px;height:2px"></i><span>2</span></div>
<div class="cell" style="left:90px;top:0"><i style="left:13px;top:13px;width:3px;height:3px"></i><span>3</span></div>
<div class="cell" style="left:120px;top:0"><i style="left:13px;top:13px;width:4px;height:4px"></i><span>4</span></div>
<div class="cell" style="left:0;top:37px"><i style="left:12px;top:13px;width:5px;height:5px"></i><span>5</span></div>
<div class="cell" style="left:30px;top:37px"><i style="left:12px;top:12px;width:6px;height:6px"></i><span>7</span></div>
<div class="cell" style="left:60px;top:37px"><i style="left:10px;top:11px;width:9px;height:9px"></i><span>10</span></div>
<div class="cell" style="left:90px;top:37px"><i style="left:10px;top:10px;width:10px;height:10px"></i><span>12</span></div>
<div class="cell" style="left:120px;top:37px"><i style="left:8px;top:9px;width:12px;height:12px"></i><span>15</span></div>
<div class="cell" style="left:0;top:75px"><i style="left:7px;top:7px;width:16px;height:16px"></i><span>20</span></div>
<div class="cell" style="left:30px;top:75px"><i style="left:6px;top:6px;width:18px;height:18px"></i><span>25</span></div>
<div class="cell" style="left:60px;top:75px"><i style="left:6px;top:6px;width:18px;height:18px"></i><span>30</span></div>
<div class="cell" style="left:90px;top:75px"><i style="left:6px;top:6px;width:18px;height:18px"></i><span>40</span></div>
<div class="cell" style="left:120px;top:75px"><i style="left:6px;top:6px;width:18px;height:18px"></i><span>50</span></div>
<div class="cell" style="left:0;top:112px"><i style="left:6px;top:6px;width:18px;height:18px"></i><span>70</span></div>
<div class="cell" style="left:30px;top:112px"><i style="left:6px;top:6px;width:18px;height:18px"></i><span>100</span></div>
<div class="cell" style="left:60px;top:112px"><i style="left:6px;top:6px;width:18px;height:18px"></i><span>150</span></div>
<div class="cell" style="left:90px;top:112px"><i style="left:6px;top:6px;width:18px;height:18px"></i><span>200</span></div>
<div class="cell" style="left:120px;top:112px"><i style="left:6px;top:6px;width:18px;height:18px"></i><span>300</span></div>
<div class="cell" style="left:0;top:150px"><i style="left:6px;top:6px;width:18px;height:18px"></i></div>
<div class="cell" style="left:30px;top:150px"><i style="left:6px;top:6px;width:18px;height:18px"></i></div>
<div class="cell" style="left:60px;top:150px"><i style="left:6px;top:6px;width:18px;height:18px"></i></div>
<div class="cell" style="left:90px;top:150px"><i style="left:6px;top:6px;width:18px;height:18px"></i></div>
</div>
<div style="left:1009px;top:402px;width:14px;height:159px;background:#333"></div>
<div style="left:1009px;top:410px;width:14px;height:121px;background:#6e6e6e;border-radius:3px"></div>
<div class="t" style="left:1012px;top:402px;font-size:6px;color:#aaa">▲</div>
<div class="t" style="left:1012px;top:551px;font-size:6px;color:#aaa">▼</div>

<div style="left:0;top:561px;width:1024px;height:13px;background:#232323"></div>
<div style="left:0;top:574px;width:1024px;height:2px;background:#5a3a42"></div>
<div class="t c" style="left:4px;top:563px;color:#bbb">382 * 382 pixel</div>
<div class="t c" style="left:67px;top:563px;color:#bbb">(2.8 * 2.8cm)</div>
<div class="t c" style="left:123px;top:563px;color:#bbb">350 dpi</div>
<div class="t c" style="left:158px;top:563px;color:#bbb">100 %</div>
<div class="t c" style="left:188px;top:563px;color:#bbb">( 489, 245 )</div>
<div class="t" style="left:237px;top:563px;font-size:8.950px;color:#bbb">Vẽ một đường thẳng bằng cách giữ phím Shift, Thay đổi cỡ cọ bằng cách giữ phím Ctrl, Alt và kéo</div>

<div class="t" style="left:791px;top:518px;font-size:13.500px;line-height:15px;color:rgba(200,200,200,.5)">Activate Windows</div>
<div class="t" style="left:791px;top:536px;font-size:9.500px;color:rgba(200,200,200,.5)">Go to PC settings to activate Windows.</div>

</body></html>
